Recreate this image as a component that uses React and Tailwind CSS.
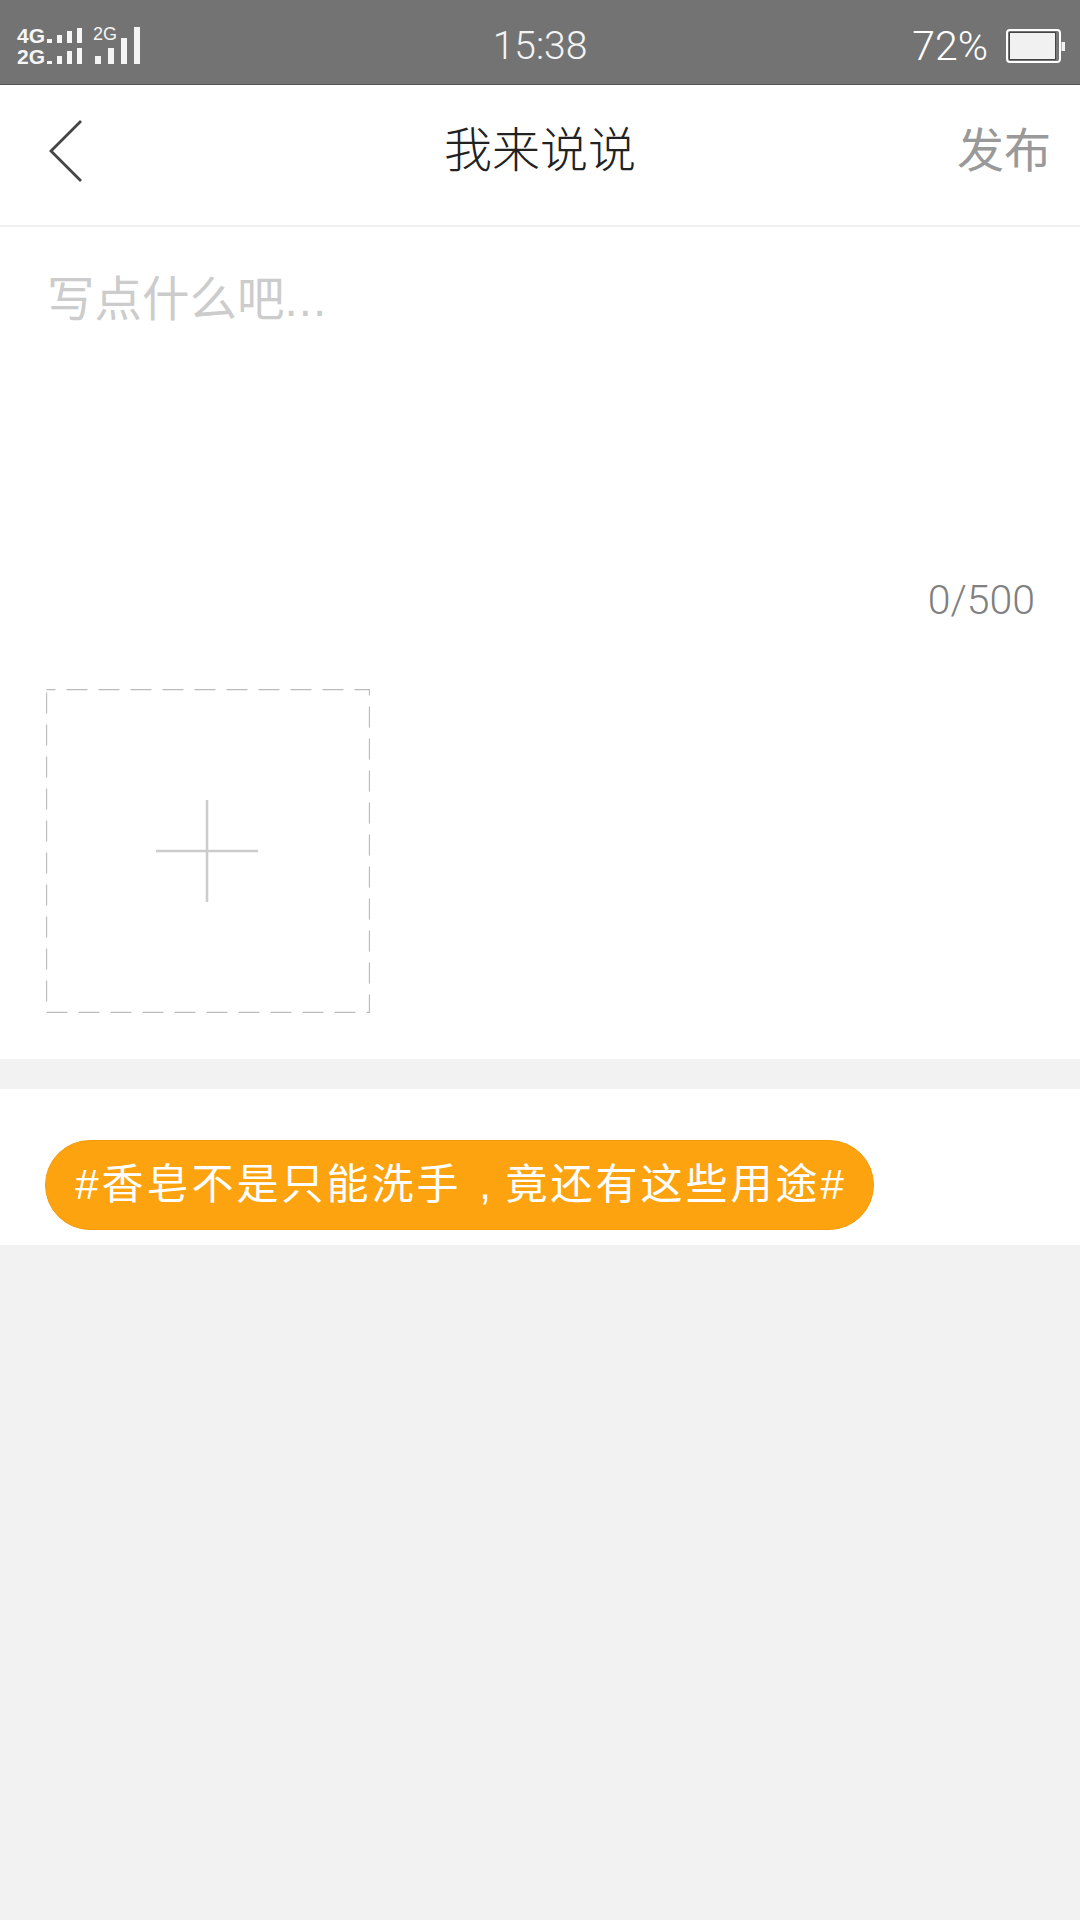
import React from "react";

const cjk = "font-['Liberation_Sans','Noto_Sans_CJK_SC',sans-serif]";

const SignalIcon = () => (
  <svg width="127" height="48" viewBox="-2 -5 127 48" className="block">
    <g fill="#f6f6f6" fontFamily="'Liberation Sans', sans-serif" fontWeight="700" fontSize="21">
      <text x="0" y="16">4G</text>
      <text x="0" y="37">2G</text>
      <rect x="30" y="12" width="5" height="4" />
      <rect x="40" y="8" width="5" height="8" />
      <rect x="50" y="4" width="5" height="12" />
      <rect x="60" y="1" width="5" height="15" />
      <rect x="30" y="34" width="5" height="3" />
      <rect x="40" y="29" width="5" height="8" />
      <rect x="50" y="24" width="5" height="13" />
      <rect x="60" y="21" width="5" height="16" />
    </g>
    <text x="76" y="13" fill="#f6f6f6" fontFamily="'Liberation Sans', sans-serif" fontSize="18">2G</text>
    <g fill="#f4f4f4">
      <rect x="78" y="29" width="6" height="8" />
      <rect x="91" y="21" width="6" height="16" />
      <rect x="104" y="11" width="6" height="26" />
      <rect x="117" y="0" width="6" height="37" />
    </g>
  </svg>
);

const BatteryIcon = () => (
  <svg width="59" height="34" viewBox="0 0 59 34" className="block">
    <rect x="1" y="1" width="53" height="32" rx="3" fill="none" stroke="#fff" strokeWidth="2" />
    <rect x="3.5" y="3.5" width="46" height="27" fill="#f1f1f1" stroke="#444" strokeWidth="1" />
    <rect x="50" y="4" width="2" height="26" fill="#777" />
    <rect x="55.5" y="13" width="3.5" height="9" fill="#f1f1f1" />
  </svg>
);

export default function App() {
  return (
    <div className={`w-[1080px] h-[1920px] bg-[#f2f2f2] ${cjk} overflow-hidden`}>
      {/* status bar */}
      <div className="h-[85px] bg-[#737373] border-b border-[#555555] grid grid-cols-3 items-center pt-[8px] pl-[15px] pr-[15px] text-white">
        <SignalIcon />
        <div className="text-center text-[39px] leading-none font-['Roboto'] font-light text-[#f4f4f4]">15:38</div>
        <div className="flex justify-end items-center gap-[18px]">
          <span className="text-[41px] leading-none font-['Roboto'] font-light">72%</span>
          <BatteryIcon />
        </div>
      </div>

      {/* header */}
      <div className="h-[142px] bg-white border-b-2 border-[#f0f0f0] grid grid-cols-[1fr_auto_1fr] items-center pb-[8px] px-[29px]">
        <svg width="34" height="64" viewBox="0 0 34 64" className="block ml-[20px]">
          <path d="M32 2 L2 32 L32 62" fill="none" stroke="#444" strokeWidth="2.8" />
        </svg>
        <div className="text-[48px] leading-[70px] font-light text-[#222222]">我来说说</div>
        <span className="text-right text-[47px] leading-[70px] text-[#999999]">发布</span>
      </div>

      {/* editor */}
      <div className="h-[832px] bg-white pl-[46px] pr-[45px] pt-[38px]">
        <div className="text-[47.5px] leading-[70px] text-[#cccccc] pl-[1px]">
          写点什么吧<span className="tracking-[1px]">...</span>
        </div>
        <div className="mt-[240px] text-right text-[41px] leading-[50px] font-['Roboto'] font-light text-[#808080]">0/500</div>
        <div className="relative mt-[64px] w-[324px] h-[324px] flex items-center justify-center pr-[3px]">
          <svg width="324" height="324" viewBox="0 0 324 324" className="absolute inset-0">
            <rect x="0.5" y="0.5" width="323" height="323" fill="none" stroke="#bbbbbb" strokeWidth="1.3" strokeDasharray="21 11" strokeDashoffset="12" />
          </svg>
          <svg width="102" height="102" viewBox="0 0 102 102" className="block">
            <path d="M51 0V102M0 51H102" stroke="#cccccc" strokeWidth="2.5" />
          </svg>
        </div>
      </div>

      {/* topic */}
      <div className="mt-[30px] h-[156px] bg-white pt-[51px] pl-[45px]">
        <div className="w-[829px] h-[90px] pl-[3px] rounded-full bg-[#fda30f] border border-[#f79a06] flex items-center justify-center text-[42px] tracking-[3px] leading-none text-white whitespace-pre">
          <span>#香皂不是只能洗手 <span className="inline-block translate-x-[3px]">,</span> 竟还有这些用途#</span>
        </div>
      </div>
    </div>
  );
}
